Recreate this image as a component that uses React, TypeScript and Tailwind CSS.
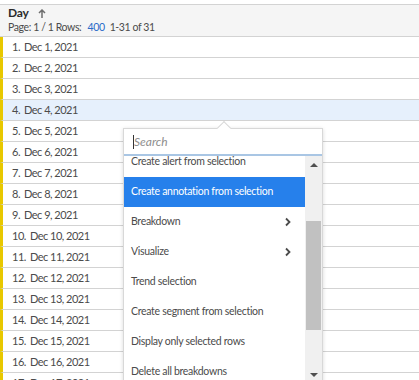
import React from 'react';

// rows of the freeform table
const days = Array.from({ length: 31 }, (_, i) => `Dec ${i + 1}, 2021`);

const menuItems = [
  { label: 'Create alert from selection' },
  { label: 'Create annotation from selection', active: true },
  { label: 'Breakdown', sub: true },
  { label: 'Visualize', sub: true },
  { label: 'Trend selection' },
  { label: 'Create segment from selection' },
  { label: 'Display only selected rows' },
  { label: 'Delete all breakdowns' },
];

function Chevron() {
  return (
    <svg width="8" height="10" viewBox="0 0 8 10" className="text-[#4b4b4b]">
      <path d="M2 1.5 L5.5 5 L2 8.5" fill="none" stroke="currentColor" strokeWidth="1.8" />
    </svg>
  );
}

export default function App() {
  return (
    <div
      className="relative w-[419px] h-[380px] overflow-hidden bg-white text-[#4b4b4b]"
      style={{ fontFamily: 'Lato, "Open Sans", sans-serif' }}
    >
      {/* header */}
      <div className="mt-[4px] h-[33px] border-t border-b border-[#d3d3d3] bg-[#f5f5f5] pl-[8px] pt-[1px]">
        <div className="flex items-center gap-[9px] text-[12px] font-bold text-[#2c2c2c] leading-[14px] tracking-[-0.2px]">
          Day
          <svg width="8" height="9" viewBox="0 0 8 9">
            <path d="M4 1 L4 9 M1 4 L4 1 L7 4" fill="none" stroke="#6e6e6e" strokeWidth="1.5" />
          </svg>
        </div>
        <div className="mt-[1px] text-[10.5px] leading-[13px] tracking-[-0.4px] text-[#4b4b4b]">
          Page: 1 / 1 Rows: <span className="ml-[4px] text-[#2b6bc9]">400</span>
          <span className="ml-[5px]">1-31 of 31</span>
        </div>
      </div>

      {/* rows */}
      {days.map((d, i) => (
        <div
          key={d}
          className={`flex h-[21px] items-center border-b border-[#d3d3d3] border-l-[3px] border-l-[#e8c800] pl-[9px] text-[11px] tracking-[-0.5px] ${
            i === 3 ? 'bg-[#e6f0fc]' : 'bg-white'
          }`}
        >
          <span className="mr-[4px]">{i + 1}.</span>
          {d}
        </div>
      ))}

      {/* context menu */}
      <div className="absolute left-[123px] top-[128px] h-[256px] w-[200px] border border-[#d8d8d8] bg-white shadow-[0_1px_4px_rgba(0,0,0,0.15)]">
        <div className="absolute -top-[6px] left-[95px] h-[10px] w-[10px] rotate-45 border-l border-t border-[#d8d8d8] bg-white" />
        <div className="relative flex h-[27px] items-center border-b-2 border-[#a9c6e4] bg-white pl-[9px] text-[12px]">
          <span className="h-[14px] w-px bg-[#333]" />
          <span className="italic text-[#8e8e8e]">Search</span>
        </div>
        <div className="flex h-[227px]">
          <div className="flex-1 overflow-hidden">
            <div className="-mt-[9px]">
              {menuItems.map((m) => (
                <div
                  key={m.label}
                  className={`flex h-[30px] items-center justify-between pl-[7px] pr-[13px] text-[10.5px] tracking-[-0.3px] ${
                    m.active ? 'bg-[#2680eb] text-white' : 'text-[#4b4b4b]'
                  }`}
                >
                  {m.label}
                  {m.sub && <Chevron />}
                </div>
              ))}
            </div>
          </div>
          {/* scrollbar */}
          <div className="flex w-[17px] flex-col items-center bg-[#f0f0f0]">
            <div className="flex h-[17px] items-center justify-center">
              <div className="h-0 w-0 border-x-[4px] border-b-[4px] border-x-transparent border-b-[#505050]" />
            </div>
            <div className="mt-[48px] h-[109px] w-[15px] bg-[#c1c1c1]" />
            <div className="mt-auto flex h-[17px] items-center justify-center">
              <div className="h-0 w-0 border-x-[4px] border-t-[4px] border-x-transparent border-t-[#505050]" />
            </div>
          </div>
        </div>
      </div>
    </div>
  );
}
